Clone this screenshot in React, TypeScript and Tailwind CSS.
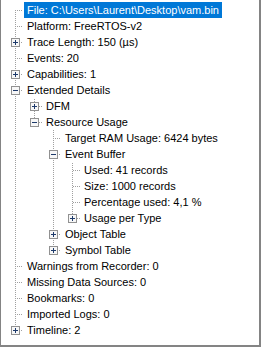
import React from "react";

type Node = { label: string; children?: Node[]; expanded?: boolean; selected?: boolean };

const tree: Node[] = [
  { label: "File: C:\\Users\\Laurent\\Desktop\\vam.bin", selected: true },
  { label: "Platform: FreeRTOS-v2" },
  { label: "Trace Length: 150 (µs)", children: [{ label: "x" }] },
  { label: "Events: 20" },
  { label: "Capabilities: 1", children: [{ label: "x" }] },
  {
    label: "Extended Details",
    expanded: true,
    children: [
      { label: "DFM", children: [{ label: "x" }] },
      {
        label: "Resource Usage",
        expanded: true,
        children: [
          { label: "Target RAM Usage: 6424 bytes" },
          {
            label: "Event Buffer",
            expanded: true,
            children: [
              { label: "Used: 41 records" },
              { label: "Size: 1000 records" },
              { label: "Percentage used: 4,1 %" },
              { label: "Usage per Type", children: [{ label: "x" }] },
            ],
          },
          { label: "Object Table", children: [{ label: "x" }] },
          { label: "Symbol Table", children: [{ label: "x" }] },
        ],
      },
    ],
  },
  { label: "Warnings from Recorder: 0" },
  { label: "Missing Data Sources: 0" },
  { label: "Bookmarks: 0" },
  { label: "Imported Logs: 0" },
  { label: "Timeline: 2", children: [{ label: "x" }] },
];

type Row = {
  node: Node;
  level: number;
  isLast: boolean;
  isFirstRoot: boolean;
  ancestorsNext: boolean[];
};

function flatten(nodes: Node[], level: number, anc: boolean[], out: Row[]) {
  nodes.forEach((n, i) => {
    const isLast = i === nodes.length - 1;
    out.push({ node: n, level, isLast, isFirstRoot: level === 0 && i === 0, ancestorsNext: anc });
    if (n.children && n.expanded) flatten(n.children, level + 1, [...anc, !isLast], out);
  });
  return out;
}

const rows = flatten(tree, 0, [], []);
const INDENT = 19;
const cxOf = (l: number) => 14 + INDENT * l;

function Dots({ x0, y0, x1, y1 }: { x0: number; y0: number; x1: number; y1: number }) {
  const r: React.ReactElement[] = [];
  for (let x = x0; x <= x1; x++) {
    for (let y = y0; y <= y1; y++) {
      if ((x + y) % 2 === 0) r.push(<rect key={`${x}-${y}`} x={x} y={y} width={1} height={1} />);
    }
  }
  return <g fill="#a0a0a0">{r}</g>;
}

function Gutter({ row }: { row: Row }) {
  const w = 23 + INDENT * row.level;
  const cx = cxOf(row.level);
  const hasKids = !!row.node.children;
  return (
    <svg width={w} height={16} className="shrink-0 block" shapeRendering="crispEdges">
      {row.ancestorsNext.map((has, l) =>
        has ? <Dots key={l} x0={cxOf(l)} y0={0} x1={cxOf(l)} y1={15} /> : null
      )}
      <Dots x0={cx} y0={row.isFirstRoot ? 8 : 0} x1={cx} y1={row.isLast ? 8 : 15} />
      <Dots x0={cx + 1} y0={8} x1={w - 2} y1={8} />
      {hasKids && (
        <g>
          <rect x={cx - 4 + 0.5} y={4.5} width={8} height={8} fill="#f7f7f7" stroke="#919191" />
          <rect x={cx - 2} y={8} width={5} height={1} fill="#1d3a6b" />
          {!row.node.expanded && <rect x={cx} y={6} width={1} height={5} fill="#1d3a6b" />}
        </g>
      )}
    </svg>
  );
}

export default function App() {
  return (
    <div
      className="w-[261px] h-[347px] bg-white border-l border-r-2 border-b-2 border-[#848484] pt-[2px] overflow-hidden"
      style={{ fontFamily: '"Liberation Sans", Arial, sans-serif' }}
    >
      {rows.map((row, i) => (
        <div key={i} className="flex items-center h-4">
          <Gutter row={row} />
          <span
            className={
              row.node.selected
                ? "h-4 leading-4 text-[11px] pl-[3px] pr-[3px] whitespace-nowrap bg-[#0078d7] text-white"
                : "h-4 leading-4 text-[11px] pl-[3px] pr-[3px] whitespace-nowrap text-black"
            }
          >
            {row.node.label}
          </span>
        </div>
      ))}
    </div>
  );
}
